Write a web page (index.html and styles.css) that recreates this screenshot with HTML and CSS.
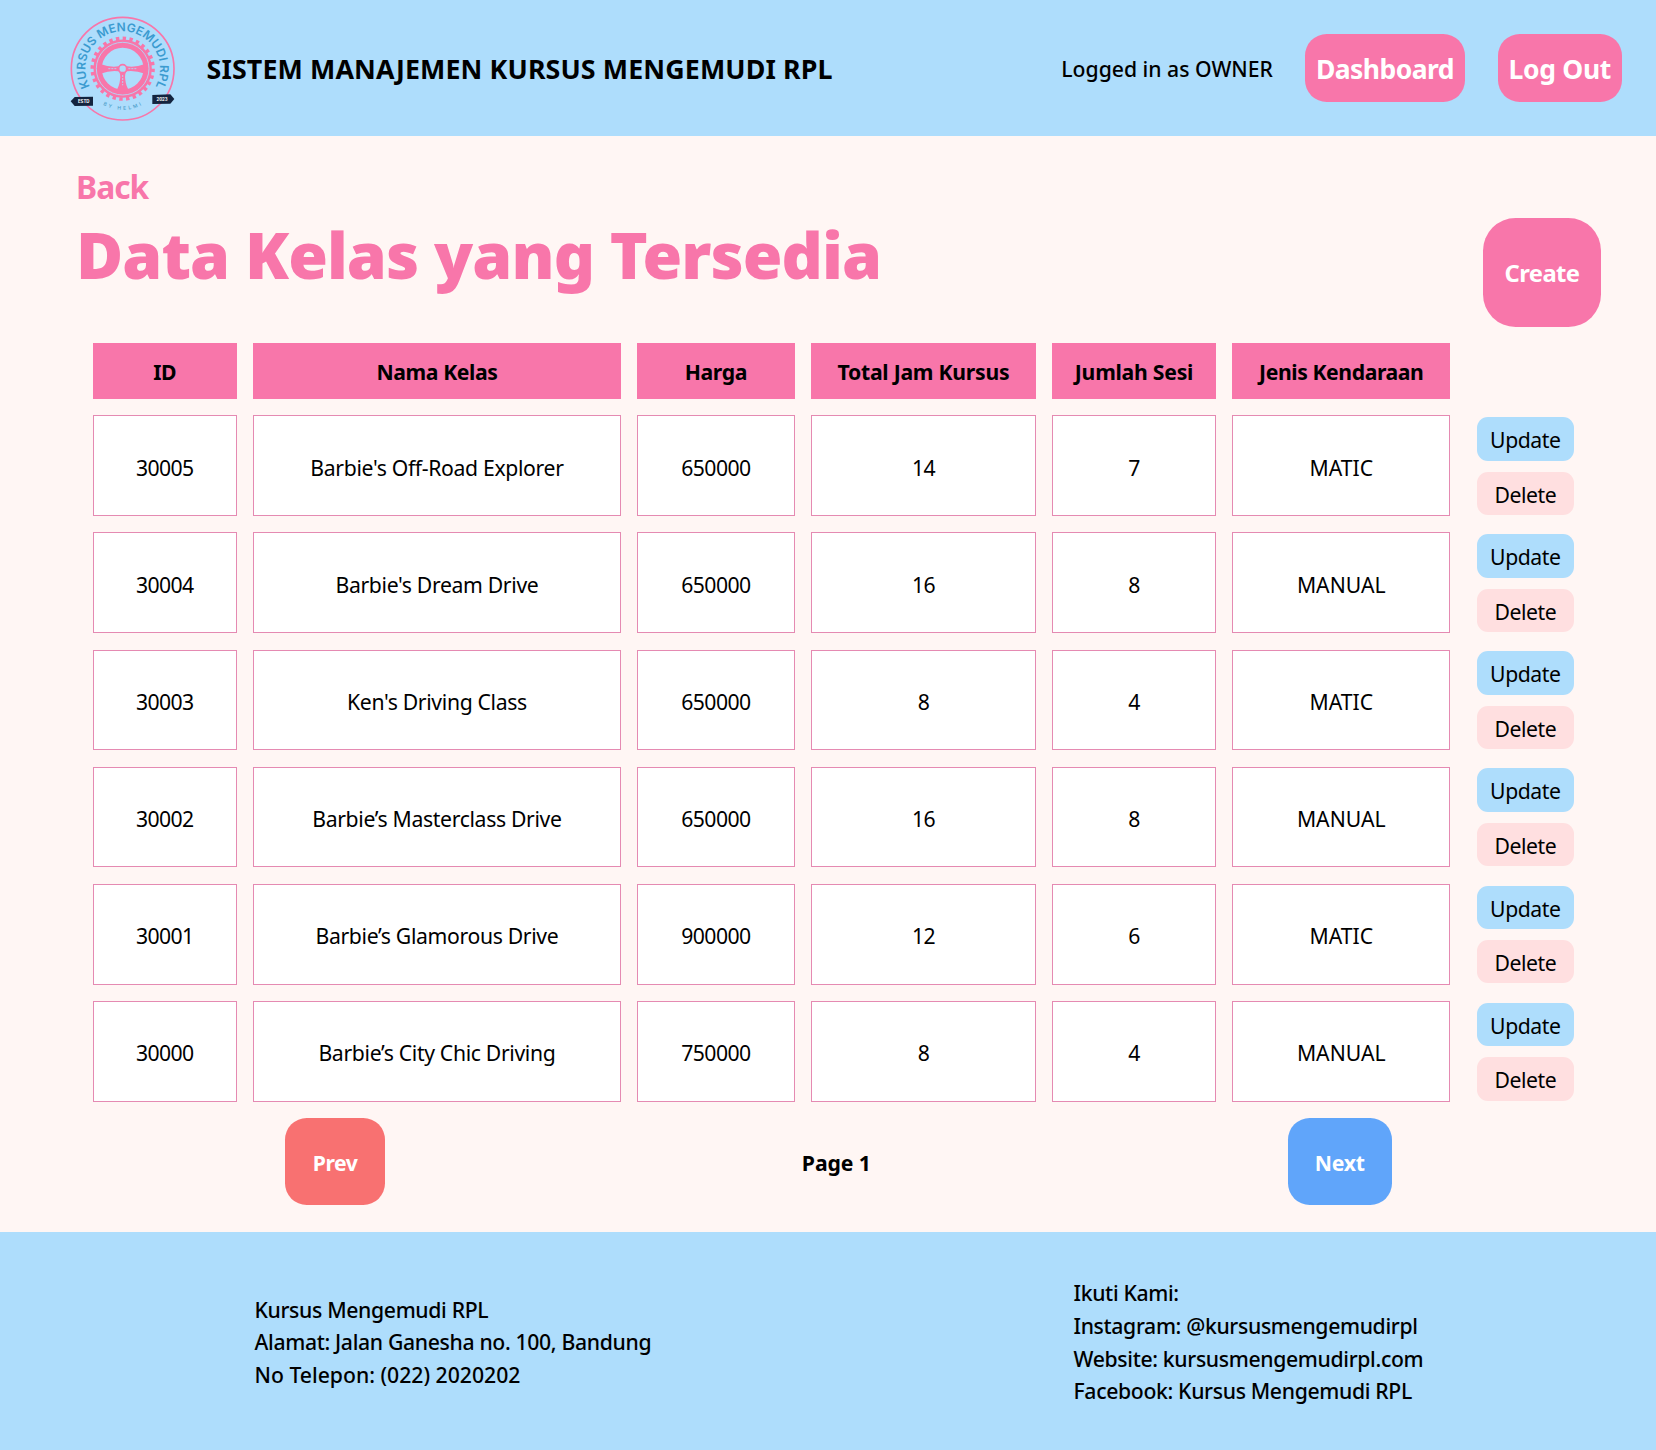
FILE: index.html
```html
<!DOCTYPE html>
<html lang="id">
<head>
<meta charset="utf-8">
<title>Sistem Manajemen Kursus Mengemudi RPL</title>
<link rel="stylesheet" href="styles.css">
</head>
<body>
<header class="topbar">
  <svg class="logo" viewBox="0 0 390 375" aria-label="Kursus Mengemudi RPL">
    <defs>
      <path id="arc-top" d="M93.8 248.5 A112 112 0 1 1 282.2 248.5"/>
      <path id="arc-bottom" d="M100 274 A122 122 0 0 0 276 274"/>
    </defs>
    <circle class="pink-line" cx="188" cy="188" r="154" stroke-width="5"/>
    <circle class="pink-line" cx="188" cy="188" r="91" stroke-width="11" pathLength="112" stroke-dasharray="2 2"/>
    <circle class="pink-line" cx="188" cy="188" r="75" stroke-width="25"/>
    <circle class="sky-line" cx="188" cy="188" r="79" stroke-width="2.5"/>
    <path class="pink-fill" d="M121 174 Q150 185 175 181 L201 181 Q226 185 255 174 L255 203 Q226 193 201 196 Q193 201 196 222 Q198 242 209 256 L167 256 Q178 242 180 222 Q183 201 175 196 Q150 193 121 203Z"/>
    <path class="sky-line" stroke-width="2.5" d="M145 188H171M205 188H231M188 207V238" stroke-dasharray="6 3"/>
    <circle class="hub" cx="188" cy="188" r="12"/>
    <text class="logo-name"><textPath href="#arc-top" startOffset="50%" text-anchor="middle" textLength="464" lengthAdjust="spacing">KURSUS MENGEMUDI RPL</textPath></text>
    <text class="logo-by"><textPath href="#arc-bottom" startOffset="51%" text-anchor="middle">BY HELMI</textPath></text>
    <path class="navy" d="M32 286 L44 273 L99 272 V299 L44 300Z"/>
    <path class="navy" d="M277 267 L331 265 L343 279 L331 293 L277 294Z"/>
    <text class="ribbon" x="71" y="290">ESTD</text>
    <text class="ribbon" x="306" y="284">2023</text>
  </svg>
  <h2 class="brand">SISTEM MANAJEMEN KURSUS MENGEMUDI RPL</h2>
  <span class="session">Logged in as OWNER</span>
  <a class="nav-btn">Dashboard</a>
  <a class="nav-btn logout">Log Out</a>
</header>
<main class="content">
  <a class="back">Back</a>
  <div class="heading">
    <h1>Data Kelas yang Tersedia</h1>
    <a class="create">Create</a>
  </div>
  <div class="grid">
    <div class="row head">
      <div class="cell">ID</div><div class="cell">Nama Kelas</div><div class="cell">Harga</div><div class="cell total">Total Jam Kursus</div><div class="cell total">Jumlah Sesi</div><div class="cell">Jenis Kendaraan</div>
    </div>
    <div class="row">
      <div class="cell num">30005</div><div class="cell">Barbie's Off-Road Explorer</div><div class="cell num">650000</div><div class="cell num">14</div><div class="cell num">7</div><div class="cell kind">MATIC</div>
      <div class="actions"><a class="update">Update</a><a class="delete">Delete</a></div>
    </div>
    <div class="row">
      <div class="cell num">30004</div><div class="cell">Barbie's Dream Drive</div><div class="cell num">650000</div><div class="cell num">16</div><div class="cell num">8</div><div class="cell kind">MANUAL</div>
      <div class="actions"><a class="update">Update</a><a class="delete">Delete</a></div>
    </div>
    <div class="row">
      <div class="cell num">30003</div><div class="cell">Ken's Driving Class</div><div class="cell num">650000</div><div class="cell num">8</div><div class="cell num">4</div><div class="cell kind">MATIC</div>
      <div class="actions"><a class="update">Update</a><a class="delete">Delete</a></div>
    </div>
    <div class="row">
      <div class="cell num">30002</div><div class="cell">Barbie’s Masterclass Drive</div><div class="cell num">650000</div><div class="cell num">16</div><div class="cell num">8</div><div class="cell kind">MANUAL</div>
      <div class="actions"><a class="update">Update</a><a class="delete">Delete</a></div>
    </div>
    <div class="row">
      <div class="cell num">30001</div><div class="cell">Barbie’s Glamorous Drive</div><div class="cell num">900000</div><div class="cell num">12</div><div class="cell num">6</div><div class="cell kind">MATIC</div>
      <div class="actions"><a class="update">Update</a><a class="delete">Delete</a></div>
    </div>
    <div class="row">
      <div class="cell num">30000</div><div class="cell">Barbie’s City Chic Driving</div><div class="cell num">750000</div><div class="cell num">8</div><div class="cell num">4</div><div class="cell kind">MANUAL</div>
      <div class="actions"><a class="update">Update</a><a class="delete">Delete</a></div>
    </div>
  </div>
  <nav class="pager">
    <a class="page-btn prev">Prev</a>
    <span class="page">Page 1</span>
    <a class="page-btn next">Next</a>
  </nav>
</main>
<footer class="footer">
  <div class="address">
    <p>Kursus Mengemudi RPL</p>
    <p>Alamat: Jalan Ganesha no. 100, Bandung</p>
    <p class="phone">No Telepon: (022) 2020202</p>
  </div>
  <div class="social">
    <p>Ikuti Kami:</p>
    <p>Instagram: @kursusmengemudirpl</p>
    <p>Website: kursusmengemudirpl.com</p>
    <p>Facebook: Kursus Mengemudi RPL</p>
  </div>
</footer>
</body>
</html>
```

FILE: styles.css
```css
* { box-sizing: border-box; margin: 0; padding: 0; }
body {
  width: 1656px;
  height: 1450px;
  display: flex;
  flex-direction: column;
  background: #fff6f4;
  color: #000;
  font: 400 21.2px/32.64px "Noto Sans", sans-serif;
}

/* top bar */
.topbar {
  height: 136px;
  display: flex;
  align-items: center;
  padding: 0 34px 0 60px;
  background: #aeddfc;
}
.logo { width: 130px; height: 125px; }
.pink-line { fill: none; stroke: #f876aa; }
.sky-line { fill: none; stroke: #aeddfc; }
.pink-fill { fill: #f876aa; }
.hub { fill: #aeddfc; stroke: #f876aa; stroke-width: 5; }
.navy { fill: #13243f; }
.logo-name { font: 600 36px "Inter", sans-serif; fill: #3b9bd0; }
.logo-by { font: 500 15px "Inter", sans-serif; letter-spacing: 7px; fill: #4a9cc9; }
.ribbon { font: 700 13px "Inter", sans-serif; fill: #fff; text-anchor: middle; }
.brand {
  margin: 3px auto 0 16.5px;
  font-size: 26.8px;
  font-weight: 700;
  letter-spacing: .12px;
  white-space: nowrap;
}
.session { margin: 3px 32px 0 0; font-weight: 500; letter-spacing: 0; }
.nav-btn {
  width: 160px;
  height: 68.5px;
  border-radius: 21.76px;
  background: #f876aa;
  color: #fff;
  font-size: 26.5px;
  font-weight: 700;
  line-height: 70px;
  letter-spacing: -.55px;
  text-align: center;
}
.logout { width: 124.5px; margin-left: 32.5px; letter-spacing: -.3px; }

/* page content */
.content { height: 1096px; display: flex; flex-direction: column; }
.back {
  margin: 27px 0 0 76px;
  color: #f876aa;
  font-size: 31.8px;
  font-weight: 700;
  line-height: 48px;
  letter-spacing: -1px;
}
.heading { display: flex; justify-content: space-between; padding: 6.5px 55px 0 76px; }
h1 {
  color: #f876aa;
  font-size: 64.3px;
  font-weight: 900;
  line-height: 72px;
  letter-spacing: -.93px;
}
.create {
  width: 118px;
  height: 109px;
  border-radius: 32.64px;
  background: #f876aa;
  color: #fff;
  font-size: 23.8px;
  font-weight: 700;
  line-height: 111px;
  letter-spacing: -.6px;
  text-align: center;
}

/* class table */
.grid { display: flex; flex-direction: column; gap: 16.3px; padding: 16.3px 0 0 92.5px; }
.row {
  display: grid;
  grid-template-columns: 144.5px 367.3px 158px 224.5px 164px 218px 97px;
  column-gap: 16.3px;
  height: 100.8px;
}
.cell {
  display: flex;
  align-items: center;
  justify-content: center;
  padding-top: 4.6px;
  border: 1px solid #e58ab2;
  background: #fff;
  letter-spacing: -.34px;
}
.num { letter-spacing: -.6px; }
.kind { letter-spacing: 0; }
.head { height: 56.3px; }
.head .cell { padding-top: 3px; background: #f876aa; border-color: #f876aa; font-weight: 700; letter-spacing: -.42px; }
.head .total { letter-spacing: -.25px; }
.actions { display: flex; flex-direction: column; gap: 10.9px; padding: 1.8px 0 0 10.4px; width: 107px; }
.actions a {
  height: 43.5px;
  border-radius: 10.88px;
  line-height: 46.4px;
  letter-spacing: -.45px;
  text-align: center;
}
.update { background: #aeddfc; }
.delete { background: #ffdfe0; }

/* pagination */
.pager {
  display: flex;
  align-items: center;
  justify-content: space-between;
  padding: 16px 264px 0 285px;
  font-weight: 700;
}
.page-btn {
  height: 87px;
  border-radius: 21.76px;
  color: #fff;
  line-height: 89px;
  text-align: center;
}
.prev { width: 100px; background: #f87171; letter-spacing: -.5px; }
.next { width: 104.4px; background: #60a5fa; letter-spacing: -.2px; }
.page { padding-top: 4px; letter-spacing: -.1px; }

/* footer */
.footer {
  flex: 1;
  display: grid;
  grid-template-columns: 819px 1fr;
  align-items: center;
  padding: 3.4px 0 0 254.5px;
  background: #aeddfc;
  font-weight: 500;
  letter-spacing: -.34px;
}
.phone { letter-spacing: 0; }
```
